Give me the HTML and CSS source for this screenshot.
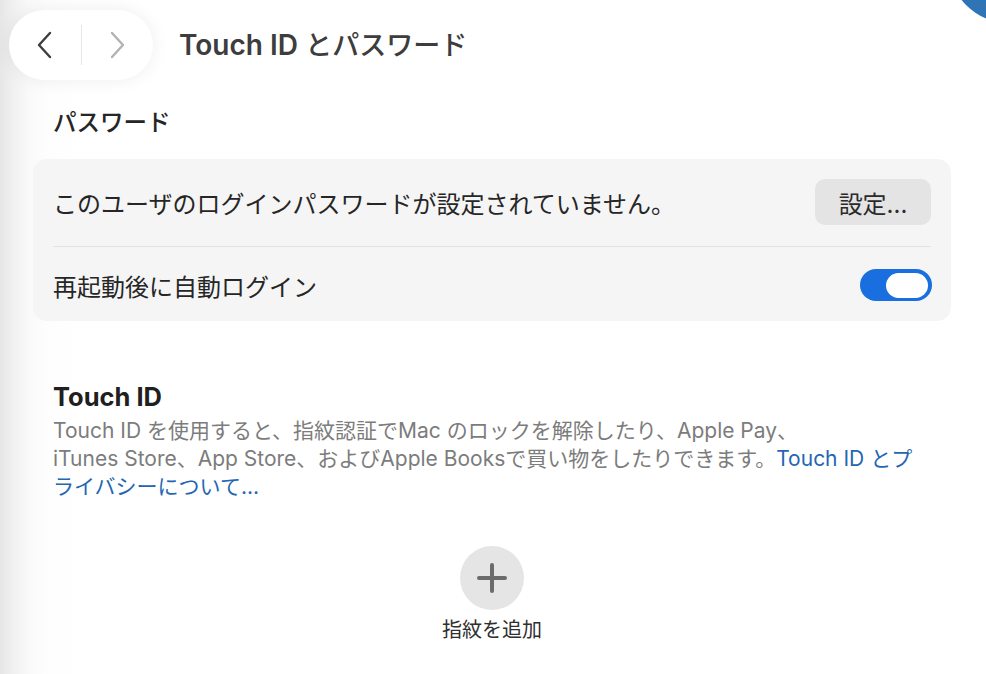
FILE: index.html
```html
<!DOCTYPE html>
<html lang="ja">
<head>
<meta charset="UTF-8">
<title>Touch ID とパスワード</title>
<link rel="stylesheet" href="styles.css">
</head>
<body>
	<div class="corner"><div class="corner-dot"></div></div>
	<header class="topbar">
		<div class="nav">
			<span class="nav-btn">
				<svg width="20" height="30" viewBox="0 0 20 30"><path d="M15 3 L4 15 L15 27" fill="none" stroke="#3e3e3e" stroke-width="2.4" stroke-linecap="round" stroke-linejoin="round"/></svg>
			</span>
			<span class="nav-sep"></span>
			<span class="nav-btn">
				<svg width="20" height="30" viewBox="0 0 20 30"><path d="M5 3 L16 15 L5 27" fill="none" stroke="#b2b2b2" stroke-width="2.4" stroke-linecap="round" stroke-linejoin="round"/></svg>
			</span>
		</div>
		<h1 class="title"><span class="title-en">Touch ID</span> とパスワード</h1>
	</header>

	<main class="content">
		<h2 class="section-title">パスワード</h2>
		<section class="card">
			<div class="row">
				<span>このユーザのログインパスワードが設定されていません。</span>
				<button class="btn">設定...</button>
			</div>
			<div class="sep"></div>
			<div class="row row-small">
				<span>再起動後に自動ログイン</span>
				<span class="toggle"><span class="knob"></span></span>
			</div>
		</section>

		<h2 class="touch-title">Touch ID</h2>
		<p class="desc">Touch ID を使用すると、指紋認証でMac のロックを解除したり、Apple Pay、<br>iTunes Store、App Store、およびApple Booksで買い物をしたりできます。<a href="#" class="link">Touch ID とプ<br>ライバシーについて...</a></p>

		<div class="add">
			<div class="add-circle">
				<svg width="30" height="30" viewBox="0 0 30 30"><path d="M15 2 V28 M2 15 H28" stroke="#6b6b6b" stroke-width="4" stroke-linecap="round"/></svg>
			</div>
			<div class="add-label">指紋を追加</div>
		</div>
	</main>
</body>
</html>
```

FILE: styles.css
```css
*{
	margin: 0;
	padding: 0;
	box-sizing: border-box;
}
html, body{
	height: 100%;
}
body{
	font-family: "Inter", "Noto Sans CJK JP", sans-serif;
	color: #262626;
	background: linear-gradient(to right, #e6e6e6 0px, #f1f1f1 14px, #f9f9f9 28px, #fdfdfd 45px, #fff 80px);
	overflow: hidden;
	position: relative;
}
.corner{
	position: absolute;
	right: 0;
	top: 0;
	width: 40px;
	height: 30px;
	overflow: hidden;
}
.corner-dot{
	position: absolute;
	width: 130px;
	height: 130px;
	border-radius: 50%;
	background: #2f74b4;
	left: 1px;
	top: -106px;
}

/* top bar */
.topbar{
	display: flex;
	align-items: center;
	padding: 10px 0 0 9px;
}
.nav{
	width: 144px;
	height: 70px;
	border-radius: 35px;
	background: #fff;
	box-shadow: 0 0 18px rgba(0,0,0,0.07);
	display: flex;
	align-items: center;
	justify-content: center;
}
.nav-btn{
	width: 71px;
	display: flex;
	justify-content: center;
}
.nav-sep{
	width: 1px;
	height: 40px;
	background: #e6e6e6;
}
.title{
	margin-left: 26px;
	font-size: 27px;
	font-weight: 500;
	color: #3d3d3d;
	line-height: 34px;
}
.title-en{
	font-size: 28px;
	font-weight: 600;
}

/* content */
.content{
	padding: 0 55px 0 33px;
}
.section-title{
	margin: 28px 0 0 20px;
	font-size: 23.5px;
	font-weight: 500;
	line-height: 30px;
	color: #262626;
}
.card{
	margin-top: 21px;
	width: 918px;
	background: #f5f5f5;
	border-radius: 14px;
	padding: 20px 20px 20px;
}
.row{
	display: flex;
	align-items: center;
	justify-content: space-between;
	height: 46px;
	font-size: 24px;
}
.row-small{
	height: 32px;
}
.sep{
	height: 1px;
	background: #e2e2e2;
	margin: 21px 0 22px;
}
.btn{
	width: 116px;
	height: 46px;
	border: none;
	border-radius: 10px;
	background: #e4e4e4;
	font-family: inherit;
	font-size: 24px;
	color: #2a2a2a;
}
.toggle{
	width: 72px;
	height: 32px;
	border-radius: 16px;
	background: #1a6fe0;
	display: flex;
	align-items: center;
	justify-content: flex-end;
	padding-right: 4px;
	margin-right: -1px;
}
.knob{
	width: 42px;
	height: 25px;
	border-radius: 13px;
	background: #fff;
}

.touch-title{
	margin: 61px 0 0 20px;
	font-size: 25.5px;
	font-weight: 700;
	line-height: 30px;
	color: #1f1f1f;
}
.desc{
	margin: 5px 0 0 20px;
	font-size: 21px;
	line-height: 28px;
	color: #7c7c7c;
	white-space: nowrap;
}
.link{
	color: #2466b3;
	text-decoration: none;
}

.add{
	margin-top: 45px;
	display: flex;
	flex-direction: column;
	align-items: center;
	padding-left: 20px;
}
.add-circle{
	width: 64px;
	height: 64px;
	border-radius: 50%;
	background: #e5e5e5;
	display: flex;
	align-items: center;
	justify-content: center;
}
.add-label{
	margin-top: 7px;
	font-size: 20px;
	line-height: 26px;
	color: #2f2f2f;
}
```
